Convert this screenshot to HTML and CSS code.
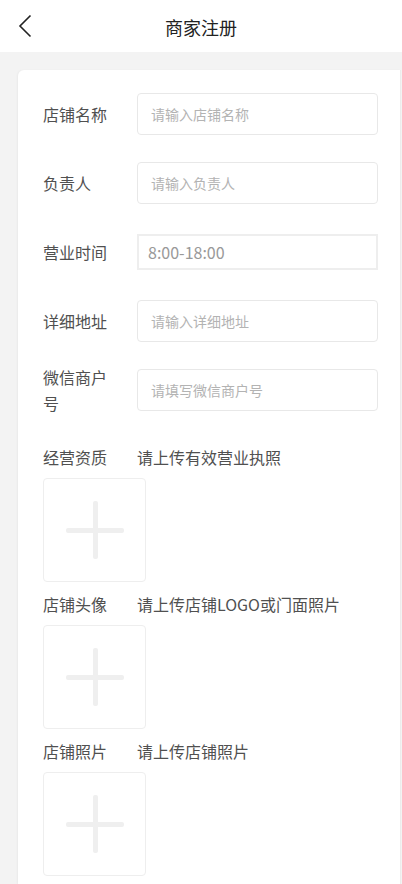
FILE: index.html
```html
<!DOCTYPE html>
<html lang="zh-CN">
<head>
<meta charset="utf-8">
<link rel="stylesheet" href="styles.css">
</head>
<body>
<header class="nav">
  <span class="back">
    <svg width="14" height="24" viewBox="0 0 14 24"><path d="M12.5 1.5 L2 12 L12.5 22.5" fill="none" stroke="#222" stroke-width="1.6"/></svg>
  </span>
  <h1 class="title">商家注册</h1>
</header>
<main class="page">
  <section class="card">
    <div class="row">
      <label class="label">店铺名称</label>
      <div class="input"><span class="ph">请输入店铺名称</span></div>
    </div>
    <div class="row">
      <label class="label">负责人</label>
      <div class="input"><span class="ph">请输入负责人</span></div>
    </div>
    <div class="row">
      <label class="label">营业时间</label>
      <div class="input time"><span class="val">8:00-18:00</span></div>
    </div>
    <div class="row">
      <label class="label">详细地址</label>
      <div class="input"><span class="ph">请输入详细地址</span></div>
    </div>
    <div class="row">
      <label class="label">微信商户号</label>
      <div class="input"><span class="ph">请填写微信商户号</span></div>
    </div>

    <div class="upload first">
      <div class="up-head"><span class="up-label">经营资质</span><span class="up-tip">请上传有效营业执照</span></div>
      <div class="box"><span class="plus-h"></span><span class="plus-v"></span></div>
    </div>
    <div class="upload">
      <div class="up-head"><span class="up-label">店铺头像</span><span class="up-tip">请上传店铺LOGO或门面照片</span></div>
      <div class="box"><span class="plus-h"></span><span class="plus-v"></span></div>
    </div>
    <div class="upload">
      <div class="up-head"><span class="up-label">店铺照片</span><span class="up-tip">请上传店铺照片</span></div>
      <div class="box"><span class="plus-h"></span><span class="plus-v"></span></div>
    </div>
  </section>
</main>
</body>
</html>
```
FILE: styles.css
```css
* { box-sizing: border-box; }
html, body { margin: 0; padding: 0; }
body {
  width: 402px;
  height: 884px;
  overflow: hidden;
  background: #f3f3f3;
  font-family: "Noto Sans CJK SC", "Noto Sans", sans-serif;
  color: #505050;
}
.nav {
  height: 52px;
  background: #fff;
  display: flex;
  align-items: center;
  justify-content: center;
  position: relative;
}
.back {
  position: absolute;
  left: 18px;
  top: 14px;
  width: 14px;
  height: 24px;
  display: flex;
}
.title {
  margin: 0;
  font-size: 18px;
  font-weight: 400;
  color: #222;
  line-height: 24px;
  margin-top: 2px;
}
.page {
  padding: 18px 0 0 18px;
}
.card {
  background: #fff;
  width: 383px;
  height: 814px;
  overflow: hidden;
  border-radius: 6px 0 0 0;
  border-right: 1px solid #ececec;
  box-shadow: -1px 0 2px rgba(0,0,0,0.04);
  padding: 23px 23px 0 25px;
}
.row {
  display: flex;
  align-items: center;
  height: 42px;
  margin-bottom: 27px;
}
.label {
  width: 94px;
  padding-right: 22px;
  font-size: 16px;
  line-height: 26px;
  color: #505050;
  flex: none;
}
.input {
  flex: none;
  width: 241px;
  height: 42px;
  border: 1px solid #e8e8e8;
  border-radius: 4px;
  display: flex;
  align-items: center;
  padding-left: 13px;
}
.ph {
  font-size: 14px;
  color: #b3b3b3;
}
.input.time {
  height: 36px;
  border: 2px solid #eeeeee;
  border-radius: 0;
  padding-left: 9px;
}
.val {
  font-size: 16px;
  color: #999;
}
.upload.first { margin-top: 33px; }
.upload { margin-bottom: 9px; }
.up-head {
  display: flex;
  font-size: 16px;
  line-height: 26px;
  color: #505050;
  margin-bottom: 8px;
}
.up-label { width: 94px; flex: none; }
.box {
  width: 103px;
  height: 104px;
  border: 1px solid #eeeeee;
  border-radius: 4px;
  position: relative;
}
.plus-h, .plus-v {
  position: absolute;
  background: #efefef;
  border-radius: 2px;
}
.plus-h {
  left: 22px;
  top: 49px;
  width: 58px;
  height: 5px;
}
.plus-v {
  left: 49px;
  top: 22px;
  width: 5px;
  height: 58px;
}
```
